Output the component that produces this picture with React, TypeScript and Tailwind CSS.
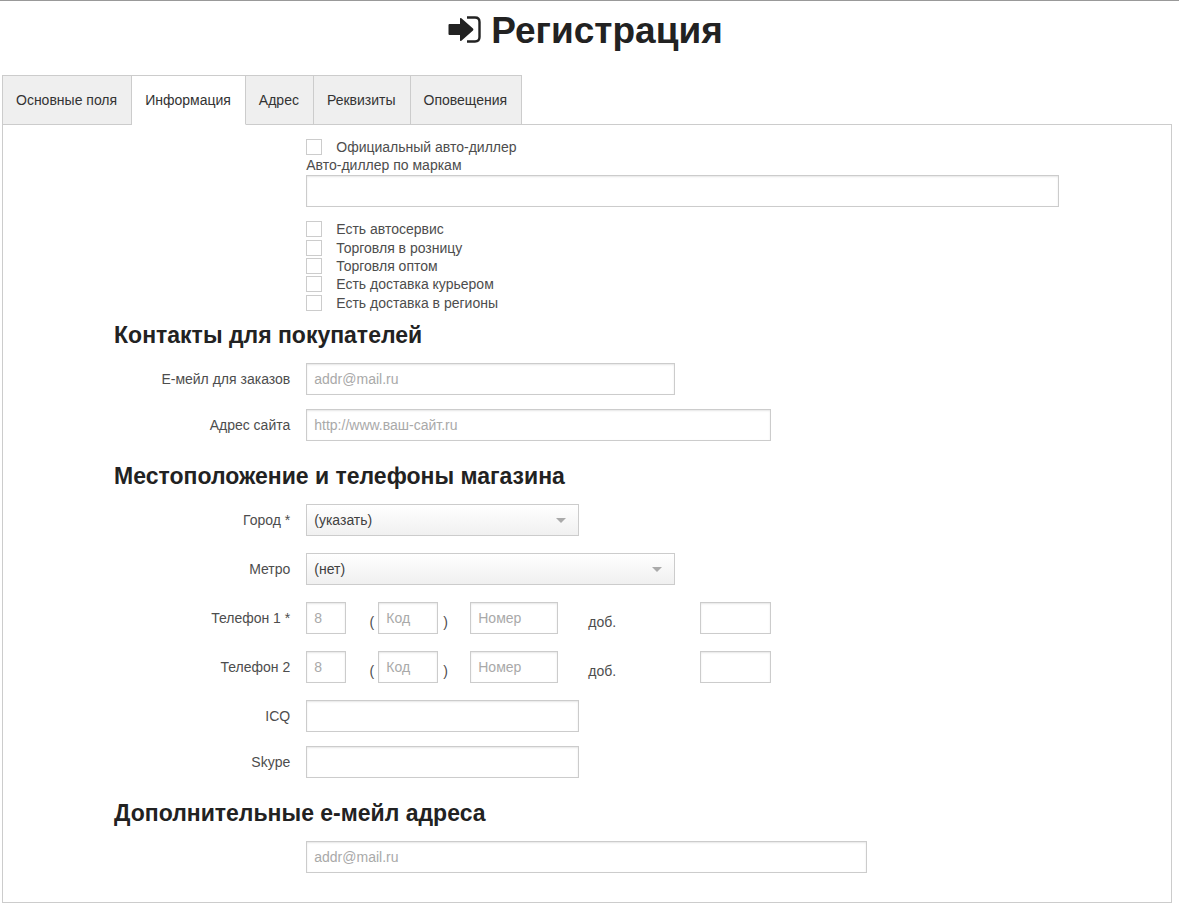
import { useId } from "react";
import type { ComponentPropsWithoutRef, ReactNode } from "react";

const tabs = ["Основные поля", "Информация", "Адрес", "Реквизиты", "Оповещения"];

const services = [
  "Есть автосервис",
  "Торговля в розницу",
  "Торговля оптом",
  "Есть доставка курьером",
  "Есть доставка в регионы",
];

const inputClass =
  "block h-8 w-full min-w-0 rounded-none border border-[#cccccc] bg-white px-[7px] text-[#4d4d4d] shadow-[inset_0_1px_2px_rgba(0,0,0,0.1)] outline-none placeholder:text-[#a9a9a9] focus:border-[#999999]";

function TextInput(props: ComponentPropsWithoutRef<"input">) {
  return <input type="text" {...props} className={inputClass} />;
}

function Checkbox({ label }: { label: string }) {
  return (
    <label className="flex items-center gap-3.5 leading-[18px]">
      <input
        type="checkbox"
        className="size-4 shrink-0 appearance-none border border-[#cccccc] bg-white checked:bg-[#4d4d4d]"
      />
      {label}
    </label>
  );
}

function SectionTitle({ children }: { children: ReactNode }) {
  return (
    <h2 className="col-span-11 col-start-2 mb-[7px] text-[23px] leading-[42px] font-bold text-[#222222]">
      {children}
    </h2>
  );
}

function RowLabel({ htmlFor, children }: { htmlFor: string; children: ReactNode }) {
  return (
    <label htmlFor={htmlFor} className="col-span-3 text-right leading-8">
      {children}
    </label>
  );
}

function Dropdown({ id, value }: { id: string; value: string }) {
  return (
    <div className="relative">
      <select
        id={id}
        className="block h-8 w-full appearance-none rounded-none border border-[#cccccc] bg-linear-to-b from-white to-[#f0f0f0] pr-8 pl-[7px] text-[#404040] outline-none"
      >
        <option>{value}</option>
      </select>
      <svg
        viewBox="0 0 10 5"
        className="pointer-events-none absolute top-3.5 right-[13px] h-[5px] w-2.5 fill-[#aaaaaa]"
        aria-hidden="true"
      >
        <path d="M0 0h10L5 5z" />
      </svg>
    </div>
  );
}

function PhoneRow({ label }: { label: string }) {
  const id = useId();
  return (
    <>
      <RowLabel htmlFor={id}>{label}</RowLabel>
      <div className="col-span-9 mb-[17px] flex h-8 leading-[40px]">
        <div className="w-10">
          <TextInput id={id} placeholder="8" />
        </div>
        <span className="w-8 pr-1 text-right">(</span>
        <div className="w-[60px]">
          <TextInput aria-label="Код" placeholder="Код" />
        </div>
        <span className="w-8 pl-[5px]">)</span>
        <div className="w-[88px]">
          <TextInput aria-label="Номер" placeholder="Номер" />
        </div>
        <label htmlFor={`${id}-ext`} className="w-[142px] pl-[30px]">
          доб.
        </label>
        <div className="w-[71px]">
          <TextInput id={`${id}-ext`} />
        </div>
      </div>
    </>
  );
}

export default function App() {
  return (
    <main className="border-t border-[#999999] bg-white pb-1 pl-0.5 font-['Liberation_Sans',Arial,sans-serif] text-sm text-[#4d4d4d]">
      <h1 className="mr-2.5 flex h-[74px] items-start justify-center gap-2.5 pt-1 text-[37px] leading-[52px] font-bold text-[#222222]">
        <svg viewBox="0 0 33 27" className="mt-[11px] h-[27px] w-[33px]" aria-hidden="true">
          <path
            d="M1.5 8H12V3Q12 1.2 13.4 2.3L25 12.4Q25.9 13.4 25 14.4L13.4 24.7Q12 25.8 12 24V19H1.5Q.5 19 .5 18V9Q.5 8 1.5 8z"
            fill="currentColor"
          />
          <path d="M19 1.5h8Q31.5 1.5 31.5 6v15Q31.5 25.5 27 25.5h-8" fill="none" stroke="currentColor" strokeWidth="2.4" />
        </svg>
        Регистрация
      </h1>

      <nav className="relative -mb-px flex" aria-label="Разделы регистрации">
        {tabs.map((tab) => (
          <button
            key={tab}
            type="button"
            className={
              tab === "Информация"
                ? "h-[50px] border-y border-r border-[#cccccc] border-b-white bg-white pr-3.5 pl-[13px] text-[#333333]"
                : "h-[50px] border-y border-r border-[#cccccc] bg-[#efefef] pr-3.5 pl-[13px] text-[#333333] first:border-l"
            }
          >
            {tab}
          </button>
        ))}
      </nav>

      <form className="mr-[7px] border border-[#cccccc] pt-[13px] pr-4 pb-[15px] pl-[15px]">
        <div className="grid grid-cols-12 items-start gap-x-4">
          <div className="col-span-8 col-start-4 pb-0.5">
            <Checkbox label="Официальный авто-диллер" />
            <label htmlFor="brands" className="block leading-[19px]">
              Авто-диллер по маркам
            </label>
            <TextInput id="brands" />
            <div className="mt-[13px] grid h-[92px] auto-rows-fr">
              {services.map((service) => (
                <Checkbox key={service} label={service} />
              ))}
            </div>
          </div>

          <SectionTitle>Контакты для покупателей</SectionTitle>
          <RowLabel htmlFor="order-email">Е-мейл для заказов</RowLabel>
          <div className="col-span-4 mb-3.5">
            <TextInput id="order-email" type="email" placeholder="addr@mail.ru" />
          </div>
          <div className="col-span-5" />
          <RowLabel htmlFor="site">Адрес сайта</RowLabel>
          <div className="col-span-5 mb-3.5">
            <TextInput id="site" placeholder="http://www.ваш-сайт.ru" />
          </div>

          <SectionTitle>Местоположение и телефоны магазина</SectionTitle>
          <RowLabel htmlFor="city">Город *</RowLabel>
          <div className="col-span-3 mb-[17px]">
            <Dropdown id="city" value="(указать)" />
          </div>
          <div className="col-span-6" />
          <RowLabel htmlFor="metro">Метро</RowLabel>
          <div className="col-span-4 mb-[17px]">
            <Dropdown id="metro" value="(нет)" />
          </div>
          <div className="col-span-5" />
          <PhoneRow label="Телефон 1 *" />
          <PhoneRow label="Телефон 2" />
          <RowLabel htmlFor="icq">ICQ</RowLabel>
          <div className="col-span-3 mb-3.5">
            <TextInput id="icq" />
          </div>
          <div className="col-span-6" />
          <RowLabel htmlFor="skype">Skype</RowLabel>
          <div className="col-span-3 mb-3.5">
            <TextInput id="skype" />
          </div>

          <SectionTitle>Дополнительные е-мейл адреса</SectionTitle>
          <div className="col-span-6 col-start-4 mb-3.5">
            <TextInput type="email" aria-label="Дополнительный е-мейл" placeholder="addr@mail.ru" />
          </div>
        </div>
      </form>
    </main>
  );
}
